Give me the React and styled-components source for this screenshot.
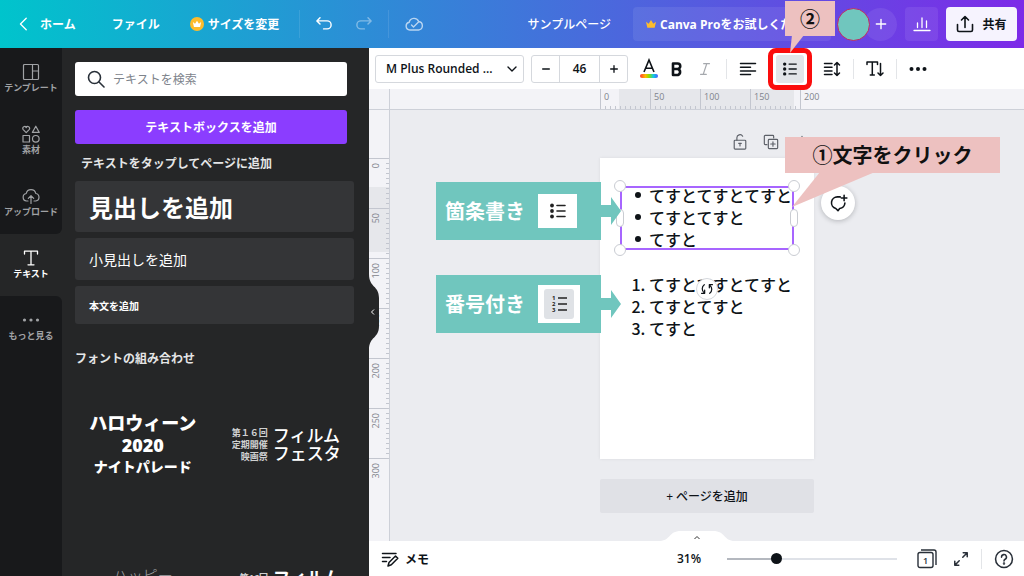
import React, {useState} from 'react';
import styled, {createGlobalStyle} from 'styled-components';

const FONT_PRESETS = ['M Plus Rounded ...', 'Noto Sans', 'Open Sans'];
const X_MARKS = [0, 50, 100, 150, 200];
const Y_MARKS = [0, 50, 100, 150, 200, 250, 300];

// アイコン共通
const Icon = ({size = 18, width = 1.5, children}) => (
  <svg
    width={size}
    height={size}
    viewBox="0 0 18 18"
    fill="none"
    stroke="currentColor"
    strokeWidth={width}
    strokeLinecap="round"
    strokeLinejoin="round"
    aria-hidden="true"
  >
    {children}
  </svg>
);

const BulletIcon = ({size}) => (
  <Icon size={size} width={1.6}>
    <g fill="currentColor" stroke="none">
      <circle cx="3" cy="3.5" r="1.9" />
      <circle cx="3" cy="9" r="1.9" />
      <circle cx="3" cy="14.5" r="1.9" />
    </g>
    <path d="M8 3.5h8M8 9h8M8 14.5h8" />
  </Icon>
);

const CrownPath = () => (
  <path
    d="M3.5 14.5L1.5 5.5l4 3L9 3l3.5 5.5 4-3-2 9z"
    fill="currentColor"
    stroke="none"
  />
);

const sideItems = [
  {
    label: 'テンプレート',
    icon: (
      <Icon width={1.2}>
        <rect x="1.5" y="1.5" width="15" height="15" rx="1" />
        <path d="M10.5 1.5v15M10.5 8h6" />
      </Icon>
    ),
  },
  {
    label: '素材',
    icon: (
      <Icon width={1.2}>
        <path d="M4.2 7.6L1 4.3C0 2 3 .4 4.2 2.6 5.4.4 8.4 2 7.4 4.3z" />
        <path d="M13.8 1.2l3.4 6.2h-6.8z" />
        <rect x="1" y="10.5" width="6.5" height="6.5" />
        <circle cx="13.8" cy="13.8" r="3.3" />
      </Icon>
    ),
  },
  {
    label: 'アップロード',
    icon: (
      <Icon width={1.2}>
        <path d="M6 14H4.5a3.8 3.8 0 0 1-.3-7.5A4.9 4.9 0 0 1 13.8 6.5a3.8 3.8 0 0 1 0 7.5H12" />
        <path d="M9 16.5V8.8M6.3 11.3L9 8.6l2.7 2.7" />
      </Icon>
    ),
  },
  {
    label: 'テキスト',
    active: true,
    icon: (
      <Icon width={1.3}>
        <path d="M2.5 5V2.2h13V5M9 2.2v13.6M6 15.8h6" />
      </Icon>
    ),
  },
  {
    label: 'もっと見る',
    icon: (
      <Icon>
        <g fill="currentColor" stroke="none">
          <circle cx="2.5" cy="9" r="1.6" />
          <circle cx="9" cy="9" r="1.6" />
          <circle cx="15.5" cy="9" r="1.6" />
        </g>
      </Icon>
    ),
  },
];

const Header = () => (
  <HeaderBar>
    <HomeLink href="#home">
      <Icon size={16}>
        <path d="M11.5 2.5L5 9l6.5 6.5" />
      </Icon>
      ホーム
    </HomeLink>
    <FileButton>ファイル</FileButton>
    <ResizeButton>
      <CrownBadge>
        <Icon size={10}>
          <CrownPath />
        </Icon>
      </CrownBadge>
      サイズを変更
    </ResizeButton>
    <HeaderLine />
    <History>
      <HeaderIcon aria-label="元に戻す">
        <Icon size={16} width={1.6}>
          <path d="M4.5 2L1 5.5 4.5 9M1 5.5h11.5a4.5 4.5 0 0 1 0 9H8.500" />
        </Icon>
      </HeaderIcon>
      <HeaderIcon aria-label="やり直す" disabled>
        <Icon size={16} width={1.6}>
          <path d="M13.5 2L17 5.5 13.5 9M17 5.5H5.500a4.5 4.5 0 0 0 0 9H9.500" />
        </Icon>
      </HeaderIcon>
    </History>
    <HeaderLine />
    <SavedMark>
      <Icon size={18} width={1.4}>
        <path d="M4.8 15a3.9 3.9 0 0 1-.6-7.700A5 5 0 0 1 13.700 6.500a4.300 4.300 0 0 1 0 8.500z" />
        <path d="M6.500 10l2 2 5-5" />
      </Icon>
    </SavedMark>
    <DocTitle>サンプルページ</DocTitle>
    <ProButton>
      <Icon size={12}>
        <CrownPath />
      </Icon>
      <span>Canva Proをお試しください</span>
    </ProButton>
    <Members>
      <Avatar />
      <AddMember aria-label="メンバーを追加">
        <Icon size={14} width={1.8}>
          <path d="M9 3v12M3 9h12" />
        </Icon>
      </AddMember>
    </Members>
    <StatsButton aria-label="分析">
      <Icon size={18} width={1.3}>
        <path d="M1 15.5h16M4.5 12.5V8M9 12.5V3M13.5 12.5V6" />
      </Icon>
    </StatsButton>
    <ShareButton>
      <Icon size={18} width={1.6}>
        <path d="M1.5 9.5v5.5a1.5 1.5 0 0 0 1.5 1.5h12a1.5 1.5 0 0 0 1.5-1.5V9.5M9 12.5V1.5M5.5 5L9 1.5 12.5 5" />
      </Icon>
      共有
    </ShareButton>
  </HeaderBar>
);

const TextPanel = () => (
  <Panel>
    <SearchBox>
      <Icon size={18} width={1.6}>
        <circle cx="7.5" cy="7.5" r="6" />
        <path d="M12 12l5 5" />
      </Icon>
      <input type="search" aria-label="テキストを検索" placeholder="テキストを検索" />
    </SearchBox>
    <AddBoxButton>テキストボックスを追加</AddBoxButton>
    <PanelHint>テキストをタップしてページに追加</PanelHint>
    <Presets>
      <PresetButton $size="24px" $height="51px" $weight="700">
        見出しを追加
      </PresetButton>
      <PresetButton $size="14px" $height="42px" $weight="400">
        小見出しを追加
      </PresetButton>
      <PresetButton $size="10px" $height="38px" $weight="700">
        本文を追加
      </PresetButton>
    </Presets>
    <PanelTitle>フォントの組み合わせ</PanelTitle>
    <Pairs>
      <HalloweenPair>
        <strong>ハロウィーン</strong>
        <strong>2020</strong>
        <span>ナイトパレード</span>
      </HalloweenPair>
      <FilmPair>
        <small>
          第１６回
          <br />
          定期開催
          <br />
          映画祭
        </small>
        <span>
          フィルム
          <br />
          フェスタ
        </span>
      </FilmPair>
      <HappyPair>ハッピー</HappyPair>
      <FilmPair $bold>
        <small>第16回</small>
        <span>フィルム</span>
      </FilmPair>
    </Pairs>
    <CollapseTab aria-label="パネルを閉じる">
      <svg width="11" height="76" viewBox="0 0 11 76" aria-hidden="true">
        <path d="M0 0c0 14 10 11 10 24v28c0 13-10 10-10 24z" fill="#252627" />
        <path d="M5 35.5L2.5 38 5 40.5" fill="none" stroke="#fff" />
      </svg>
    </CollapseTab>
  </Panel>
);

const Toolbar = () => {
  const [size, setSize] = useState(46);

  return (
    <ToolbarRow>
      <FontSelect>
        <select aria-label="フォント">
          {FONT_PRESETS.map((name) => (
            <option key={name}>{name}</option>
          ))}
        </select>
        <Icon size={12} width={2}>
          <path d="M3 6l6 6 6-6" />
        </Icon>
      </FontSelect>
      <Stepper>
        <button aria-label="小さく" onClick={() => setSize(size - 1)}>
          <Icon size={12} width={2}>
            <path d="M4 9h10" />
          </Icon>
        </button>
        <input
          aria-label="フォントサイズ"
          value={size}
          onChange={(e) => setSize(Number(e.target.value) || 0)}
        />
        <button aria-label="大きく" onClick={() => setSize(size + 1)}>
          <Icon size={12} width={2}>
            <path d="M4 9h10M9 4v10" />
          </Icon>
        </button>
      </Stepper>
      <ToolGroup>
        <ToolButton aria-label="文字色">
          <svg width="20" height="22" viewBox="0 0 20 22" aria-hidden="true">
            <defs>
              <linearGradient id="rainbow">
                <stop offset="0" stopColor="#ff3b30" />
                <stop offset="0.3" stopColor="#ffb800" />
                <stop offset="0.5" stopColor="#8be000" />
                <stop offset="0.75" stopColor="#12c8e8" />
                <stop offset="1" stopColor="#4a5cff" />
              </linearGradient>
            </defs>
            <path
              d="M5 14L10 2l5 12M6.7 10.2h6.6"
              fill="none"
              stroke="currentColor"
              strokeWidth="1.6"
            />
            <rect x="1" y="16" width="18" height="4" rx="2" fill="url(#rainbow)" />
          </svg>
        </ToolButton>
        <ToolButton aria-label="太字">
          <Icon size={18} width={2.6}>
            <path d="M5 3.500v11.500h5a3.200 3.200 0 0 0 0-6H5h4.500a2.750 2.750 0 0 0 0-5.500z" />
          </Icon>
        </ToolButton>
        <ToolButton aria-label="斜体" $muted>
          <Icon size={16} width={1.4}>
            <path d="M7.5 3H14M4 15h6.5M11 3L7 15" />
          </Icon>
        </ToolButton>
      </ToolGroup>
      <ToolLine />
      <ToolGroup $gap="14px">
        <ToolButton aria-label="配置">
          <Icon size={18}>
            <path d="M1.5 3.5h15M1.5 7.2h10M1.5 10.9h15M1.5 14.6h10" />
          </Icon>
        </ToolButton>
        <ListTool>
          <ToolButton aria-label="リスト" $active>
            <BulletIcon size={16} />
          </ToolButton>
          <RedFrame />
          <StepTwo>
            <svg width="16" height="20" viewBox="0 0 16 20" aria-hidden="true">
              <path d="M2 0L0 18 14 0z" fill="#edc1c0" />
            </svg>
            ②
          </StepTwo>
        </ListTool>
        <ToolButton aria-label="行間">
          <Icon size={18}>
            <path d="M1.5 3.5H9M1.5 7.2H9M1.5 10.9H9M1.5 14.6H9M14 2.5v13M11.5 5L14 2.5 16.5 5M11.5 13l2.5 2.5 2.5-2.5" />
          </Icon>
        </ToolButton>
      </ToolGroup>
      <ToolLine />
      <ToolButton aria-label="縦書き">
        <Icon size={18}>
          <path d="M1 4.5V2h10.5v2.5M6.3 2v13M4.3 15h4M14.5 3.5v12M12 13l2.5 2.5L17 13" />
        </Icon>
      </ToolButton>
      <ToolLine />
      <ToolButton aria-label="その他">
        <Icon size={18}>
          <g fill="currentColor" stroke="none">
            <circle cx="2.5" cy="9" r="2" />
            <circle cx="9" cy="9" r="2" />
            <circle cx="15.5" cy="9" r="2" />
          </g>
        </Icon>
      </ToolButton>
    </ToolbarRow>
  );
};

const ArrowTip = () => (
  <svg width="20" height="28" viewBox="0 0 20 28" aria-hidden="true">
    <path d="M0 8h10V0l10 14-10 14v-8H0z" fill="#70c6be" />
  </svg>
);

const DesignPage = () => (
  <PageColumn>
    <PageTools>
      <button aria-label="ロック">
        <Icon size={16} width={1.3}>
          <rect x="2.5" y="7" width="13" height="10" rx="1" />
          <path d="M5.5 7V4.5a3.5 3.5 0 0 1 6.5-2M9 13.5v-3M7.5 10.5h3" />
        </Icon>
      </button>
      <button aria-label="複製">
        <Icon size={16} width={1.3}>
          <path d="M4.5 12H2.5a1 1 0 0 1-1-1V2.5a1 1 0 0 1 1-1H11a1 1 0 0 1 1 1v2" />
          <rect x="6" y="6" width="10.5" height="10.5" rx="1" />
          <path d="M11.2 8.8v5M8.7 11.3h5" />
        </Icon>
      </button>
      <button aria-label="ページを追加">
        <Icon size={16} width={1.3}>
          <path d="M9 2.5v8M5.5 10L9 6.5l3.5 3.5M2.5 10v6h13v-6" />
        </Icon>
      </button>
    </PageTools>
    <Page>
      <SelectedText>
        <BulletList>
          <li>てすとてすとてすと</li>
          <li>てすとてすと</li>
          <li>てすと</li>
        </BulletList>
        <Frame />
        <Handle $x="0%" $y="0%" />
        <Handle $x="100%" $y="0%" />
        <Handle $x="0%" $y="100%" />
        <Handle $x="100%" $y="100%" />
        <Handle $x="0%" $y="50%" $side />
        <Handle $x="100%" $y="50%" $side />
        <RotateButton aria-label="回転">
          <Icon size={14} width={1.6}>
            <path d="M5.5 3.5C2 6 2 11 5.5 14M2 14.5h4V10.500M12.500 14.500C16 12 16 7 12.500 4M16 3.5h-4V7.500" />
          </Icon>
        </RotateButton>
      </SelectedText>
      <NumberList>
        <li>てすとてすとてすと</li>
        <li>てすとてすと</li>
        <li>てすと</li>
      </NumberList>

      <CommentButton aria-label="コメント">
        <Icon size={20} width={1.4}>
          <path d="M11 3.500H8.500A5.300 5.300 0 0 0 7 13.900l2 2 1.500-2A5.300 5.300 0 0 0 15.200 9M14.500 2v5M12 4.500h5" />
        </Icon>
      </CommentButton>

      {/* 説明用の吹き出し */}
      <LabelNote $top="24px">
        箇条書き
        <NoteIcon>
          <BulletIcon size={18} />
        </NoteIcon>
        <ArrowTip />
      </LabelNote>
      <LabelNote $top="117px">
        番号付き
        <NoteIcon $framed>
          <span>
            <svg width="20" height="20" viewBox="0 0 20 20" aria-hidden="true">
              <g fill="#222" fontSize="6" fontWeight="700" fontFamily="Open Sans, sans-serif">
                <text x="3" y="6">1</text>
                <text x="3" y="12">2</text>
                <text x="3" y="18">3</text>
              </g>
              <path d="M9 4h9M9 10h9M9 16h9" stroke="#222" strokeWidth="1.5" />
            </svg>
          </span>
        </NoteIcon>
        <ArrowTip />
      </LabelNote>
      <StepOne>
        <svg width="90" height="36" viewBox="0 0 90 36" aria-hidden="true">
          <path d="M28 0L0 35 83 0z" fill="#edc1c0" />
        </svg>
        ①文字をクリック
      </StepOne>
    </Page>
    <AddPageButton>+ ページを追加</AddPageButton>
  </PageColumn>
);

const BottomBar = () => {
  const [zoom, setZoom] = useState(31);

  return (
    <Footer>
      <DrawerTab aria-label="ページ一覧を開く">
        <svg width="76" height="11" viewBox="0 0 76 11" aria-hidden="true">
          <path d="M0 11C12 11 9 1 22 1h32c13 0 10 10 22 10z" fill="#fff" />
          <path d="M35.5 9L38 6.5 40.5 9" fill="none" stroke="#333" />
        </svg>
      </DrawerTab>
      <NotesButton>
        <Icon size={18} width={1.5}>
          <path d="M1.5 3.5H15M1.5 7.5h7.5M1.5 11.5h4M7 16l1-3.5 6.5-6.5 2.3 2.3-6.5 6.5z" />
        </Icon>
        メモ
      </NotesButton>
      <ZoomGroup>
        <label htmlFor="zoom">{zoom}%</label>
        <ZoomSlider
          id="zoom"
          type="range"
          min="5"
          max="100"
          value={zoom}
          onChange={(e) => setZoom(Number(e.target.value))}
          style={{'--fill': `${((zoom - 5) / 95) * 100}%`}}
        />
      </ZoomGroup>
      <PageCount aria-label="ページ 1">
        <svg width="20" height="20" viewBox="0 0 20 20" aria-hidden="true">
          <g fill="none" stroke="currentColor" strokeWidth="1.4">
            <rect x="1" y="3.5" width="15" height="15" rx="2" />
            <path d="M4 1h13a2 2 0 0 1 2 2v13" />
          </g>
          <text x="6" y="14.5" fontSize="9" fontWeight="600" fill="currentColor">
            1
          </text>
        </svg>
      </PageCount>
      <FooterIcon aria-label="全画面">
        <Icon size={16} width={1.7}>
          <path d="M11 7l5-5M11.5 2H16v4.5M7 11l-5 5M2 11.5V16h4.5" />
        </Icon>
      </FooterIcon>
      <ToolLine />
      <FooterIcon aria-label="ヘルプ">
        <Icon size={20} width={1.4}>
          <circle cx="9" cy="9" r="7.6" />
          <path d="M6.8 7.3a2.2 2.2 0 1 1 3.2 1.9c-.7.4-1 .8-1 1.5" />
          <circle cx="9" cy="13" r=".4" />
        </Icon>
      </FooterIcon>
    </Footer>
  );
};

const App = () => {
  return (
    <Shell>
      <GlobalStyle />
      <Header />
      <Main>
        <SideNav>
          {sideItems.map((item) => (
            <SideItem key={item.label} $active={item.active}>
              {item.icon}
              {item.label}
            </SideItem>
          ))}
        </SideNav>
        <TextPanel />
        <Editor>
          <Toolbar />
          <TopRuler>
            <RulerCorner />
            <RulerX>
              {X_MARKS.map((mark) => (
                <MarkX key={mark} $last={mark === 200}>
                  {mark}
                </MarkX>
              ))}
            </RulerX>
          </TopRuler>
          <Workspace>
            <RulerY>
              {Y_MARKS.map((mark) => (
                <MarkY key={mark} $last={mark === 300}>
                  <span>{mark}</span>
                </MarkY>
              ))}
            </RulerY>
            <Stage>
              <DesignPage />
            </Stage>
          </Workspace>
          <BottomBar />
        </Editor>
      </Main>
    </Shell>
  );
};

export default App;

const GlobalStyle = createGlobalStyle`
  * {
    box-sizing: border-box;
  }

  body {
    margin: 0;
    font-family: 'Open Sans', 'Noto Sans CJK JP', sans-serif;
    font-size: 12px;
    color: #0e1318;
  }

  button, input, select {
    font: inherit;
    color: inherit;
  }

  button {
    display: flex;
    align-items: center;
    justify-content: center;
    padding: 0;
    border: 0;
    background: none;
    white-space: nowrap;
    cursor: pointer;
  }

  svg {
    flex-shrink: 0;
  }
`;

const Shell = styled.div`
  height: 100vh;
  display: flex;
  flex-direction: column;
  overflow: hidden;
`;

const HeaderBar = styled.header`
  flex: 0 0 48px;
  display: flex;
  align-items: center;
  padding: 0 7px 0 16px;
  color: #fff;
  font-weight: 700;
  background: linear-gradient(90deg, #00c4cc, #7d2ae8);
`;

const HomeLink = styled.a`
  display: flex;
  align-items: center;
  gap: 8px;
  color: inherit;
  text-decoration: none;
  white-space: nowrap;
`;

const FileButton = styled.button`
  margin-left: 36px;
`;

const ResizeButton = styled.button`
  gap: 4px;
  margin: 0 20px 0 30px;
`;

const CrownBadge = styled.span`
  width: 14px;
  height: 14px;
  display: flex;
  align-items: center;
  justify-content: center;
  border-radius: 50%;
  background: #fdbc2b;
`;

const HeaderLine = styled.span`
  width: 1px;
  height: 28px;
  background: rgba(255, 255, 255, 0.1);
`;

const History = styled.div`
  display: flex;
  gap: 24px;
  margin: 0 16px;
`;

const HeaderIcon = styled.button`
  &:disabled {
    opacity: 0.4;
  }
`;

const SavedMark = styled.span`
  display: flex;
  margin-left: 16px;
  opacity: 0.65;
`;

const DocTitle = styled.span`
  margin: 0 22px 0 auto;
  font-weight: 500;
  white-space: nowrap;
`;

const ProButton = styled.button`
  height: 34px;
  gap: 3px;
  width: 198px;
  justify-content: flex-start;
  padding-left: 12px;
  border-radius: 4px;
  background: rgba(255, 255, 255, 0.08);
  overflow: hidden;

  svg {
    color: #fdbc2b;
  }
`;

const Members = styled.div`
  display: flex;
  margin: 0 8px 0 6px;
`;

const Avatar = styled.span`
  position: relative;
  width: 33px;
  height: 33px;
  border: 1px solid #c02a63;
  border-radius: 50%;
  background: #70c6be;
`;

const AddMember = styled.button`
  width: 33px;
  height: 33px;
  margin-left: -6px;
  border-radius: 50%;
  background: rgba(255, 255, 255, 0.08);
`;

const StatsButton = styled.button`
  width: 33px;
  height: 34px;
  border-radius: 4px;
  background: rgba(255, 255, 255, 0.08);
`;

const ShareButton = styled.button`
  width: 71px;
  height: 34px;
  gap: 8px;
  margin-left: 8px;
  border-radius: 4px;
  color: #0e1318;
  background: #f6f3fe;
`;

const Main = styled.div`
  flex: 1;
  min-height: 0;
  display: grid;
  grid-template-columns: 62px 307px minmax(0, 1fr);
`;

const SideNav = styled.nav`
  display: flex;
  flex-direction: column;
  background: #252627;

  &::after {
    content: '';
    flex: 1;
    background: #18191b;
  }
`;

const SideItem = styled.button`
  height: 62px;
  flex-direction: column;
  gap: 1px;
  padding-bottom: 2px;
  font-size: 9px;
  line-height: 12px;
  font-weight: 700;
  color: ${({$active}) => ($active ? '#fff' : '#a0a2a5')};
  background: ${({$active}) => ($active ? '#252627' : '#18191b')};

  &:nth-child(3) {
    border-bottom-right-radius: 6px;
  }

  &:nth-child(5) {
    border-top-right-radius: 6px;
  }
`;

const Panel = styled.aside`
  position: relative;
  z-index: 2;
  min-height: 0;
  display: flex;
  flex-direction: column;
  padding: 14px 15px 0 13px;
  color: #fff;
  background: #252627;
`;

const SearchBox = styled.div`
  flex: 0 0 34px;
  display: flex;
  align-items: center;
  gap: 8px;
  margin-right: 7px;
  padding: 0 12px;
  border-radius: 3px;
  background: #fff;
  color: #293039;

  input {
    flex: 1;
    min-width: 0;
    border: 0;
    padding: 0;
    outline: none;
    background: none;
  }

  input::placeholder {
    color: #7d838b;
  }
`;

const AddBoxButton = styled.button`
  flex: 0 0 34px;
  margin: 14px 7px 0 0;
  border-radius: 3px;
  background: #8b3dff;
  font-weight: 700;
`;

const PanelHint = styled.p`
  margin: 11px 0 8px 6px;
  line-height: 18px;
  font-weight: 700;
  color: #e4e5e6;
`;

const Presets = styled.div`
  display: flex;
  flex-direction: column;
  gap: 6px;
`;

const PresetButton = styled.button`
  height: ${({$height}) => $height};
  justify-content: flex-start;
  padding-left: 14px;
  border-radius: 3px;
  background: #343537;
  font-size: ${({$size}) => $size};
  font-weight: ${({$weight}) => $weight};
`;

const PanelTitle = styled.h2`
  margin: 26px 0 0;
  font-size: 12px;
  line-height: 18px;
  color: #e4e5e6;
`;

const Pairs = styled.div`
  flex: 1;
  min-height: 0;
  display: grid;
  grid-template-columns: 1fr 1fr;
  grid-template-rows: 154px 24px;
  gap: 44px 8px;
  align-items: center;
  align-content: start;
  justify-items: center;
  overflow: hidden;
`;

const HalloweenPair = styled.div`
  display: flex;
  flex-direction: column;
  align-items: center;
  line-height: 22px;
  font-size: 14px;
  font-weight: 900;

  strong {
    font-size: 18px;
    font-weight: 900;
  }
`;

const FilmPair = styled.div`
  display: flex;
  align-items: ${({$bold}) => ($bold ? 'center' : 'flex-start')};
  gap: 5px;
  font-size: 17px;
  line-height: 18px;
  font-weight: ${({$bold}) => ($bold ? 700 : 500)};
  white-space: nowrap;

  small {
    width: 36px;
    font-size: 9px;
    line-height: 12px;
    font-weight: 700;
    text-align: right;
    color: #cfd0d1;
  }
`;

const HappyPair = styled.div`
  align-self: start;
  font-size: 15px;
  line-height: 18px;
  font-weight: 300;
  color: #a0a2a5;
`;

const CollapseTab = styled.button`
  position: absolute;
  left: 100%;
  top: 50%;
  transform: translateY(-50%);
`;

const Editor = styled.main`
  min-width: 0;
  min-height: 0;
  display: flex;
  flex-direction: column;
  background: #ebecf0;
`;

const ToolbarRow = styled.div`
  flex: 0 0 41px;
  display: flex;
  align-items: center;
  gap: 7px;
  padding-left: 6px;
  background: #fff;
`;

const FontSelect = styled.div`
  position: relative;
  width: 149px;

  select {
    width: 100%;
    height: 28px;
    padding: 0 28px 0 10px;
    border: 1px solid #d5d8dd;
    border-radius: 3px;
    background: #fff;
    font-weight: 600;
    appearance: none;
  }

  svg {
    position: absolute;
    right: 6px;
    top: 8px;
    pointer-events: none;
  }
`;

const Stepper = styled.div`
  width: 97px;
  height: 28px;
  display: grid;
  grid-template-columns: 27px 1fr 27px;
  border: 1px solid #d5d8dd;
  border-radius: 3px;

  input {
    min-width: 0;
    padding: 0;
    border: solid #d5d8dd;
    border-width: 0 1px;
    text-align: center;
    font-weight: 600;
  }
`;

const ToolGroup = styled.div`
  display: flex;
  gap: ${({$gap}) => $gap || '0'};
`;

const ToolButton = styled.button`
  width: 28px;
  height: 28px;
  border-radius: 3px;
  color: ${({$muted}) => ($muted ? '#a5a8ad' : '#0e1318')};
  background: ${({$active}) => ($active ? '#e2e5e9' : 'none')};
`;

const ToolLine = styled.span`
  width: 1px;
  height: 20px;
  background: #e3e5e8;
`;

const ListTool = styled.div`
  position: relative;
  z-index: 3;
`;

const RedFrame = styled.span`
  position: absolute;
  inset: -7px -8px;
  border: 5px solid #fb0d0d;
  border-radius: 8px;
  pointer-events: none;
`;

const Callout = styled.div`
  position: absolute;
  display: flex;
  align-items: center;
  justify-content: center;
  background: #edc1c0;
  color: #111;
  font-size: 20px;
  font-weight: 700;
  white-space: nowrap;
`;

const StepTwo = styled(Callout)`
  left: 9px;
  top: -54px;
  width: 50px;
  height: 35px;

  svg {
    position: absolute;
    left: 5px;
    top: 34px;
  }
`;

const StepOne = styled(Callout)`
  left: 185px;
  top: -21px;
  width: 215px;
  height: 36px;

  svg {
    position: absolute;
    left: 7px;
    top: 35px;
  }
`;

const TopRuler = styled.div`
  flex: 0 0 21px;
  display: flex;
  border-bottom: 1px solid #cdd0d8;
  background: #f3f3f7;
`;

const RulerCorner = styled.div`
  flex: 0 0 21px;
  border-right: 1px solid #cdd0d8;
`;

const RulerX = styled.div`
  width: 214px;
  margin: 0 auto;
  display: flex;
  background: linear-gradient(90deg, transparent 19px, #e6e7eb 19px 194px, transparent 194px);
`;

const MarkX = styled.span`
  flex: 0 0 50px;
  padding: 2px 0 0 3px;
  border-left: 1px solid #c3c6cf;
  color: #7f838b;
  font-size: 9px;
  line-height: 12px;
  background: ${({$last}) =>
    $last
      ? 'none'
      : 'repeating-linear-gradient(90deg, transparent 0 4px, #c3c6cf 4px 5px) bottom / 100% 3px no-repeat'};
`;

const Workspace = styled.div`
  flex: 1;
  min-height: 0;
  display: flex;
`;

const RulerY = styled.div`
  flex: 0 0 21px;
  display: flex;
  flex-direction: column;
  padding-top: 48px;
  border-right: 1px solid #cdd0d8;
  background: linear-gradient(#f3f3f7 77px, #e6e7eb 77px 142px, #f3f3f7 142px);
`;

const MarkY = styled.div`
  flex: 0 0 50px;
  display: flex;
  padding: 4px 0 0 1px;
  border-top: 1px solid #c3c6cf;
  color: #7f838b;
  font-size: 9px;
  line-height: 12px;
  background: ${({$last}) =>
    $last
      ? 'none'
      : 'repeating-linear-gradient(transparent 0 4px, #c3c6cf 4px 5px) right / 3px 100% no-repeat'};

  span {
    align-self: flex-start;
    writing-mode: vertical-rl;
    transform: rotate(180deg);
  }
`;

const Stage = styled.section`
  flex: 1;
  min-width: 0;
  display: flex;
  justify-content: center;
`;

const PageColumn = styled.div`
  width: 214px;
  display: flex;
  flex-direction: column;
  padding-top: 24px;
`;

const PageTools = styled.div`
  display: flex;
  justify-content: flex-end;
  gap: 15px;
  padding-right: 4px;
  margin-bottom: 8px;
  color: #5c6068;
`;

const Page = styled.article`
  position: relative;
  min-height: 301px;
  padding: 28px 19px;
  background: #fff;
  box-shadow: 0 0 3px rgba(14, 19, 24, 0.08);
  font-family: 'Noto Sans CJK JP', sans-serif;
  font-size: 16px;
  line-height: 22px;
  font-weight: 500;
  white-space: nowrap;
`;

const SelectedText = styled.div`
  position: relative;
  display: flow-root;
  width: 174px;
  height: 64px;
  margin-left: 1px;
`;

const BulletList = styled.ul`
  margin: -2px 0 0;
  padding: 0 0 0 15px;
  list-style: none;

  li {
    display: flex;
    align-items: center;
    gap: 8px;
  }

  li::before {
    content: '';
    width: 6px;
    height: 6px;
    border-radius: 50%;
    background: #0e1318;
  }
`;

const NumberList = styled.ol`
  margin: 23px 0 0;
  padding: 0 0 0 30px;
`;

const Frame = styled.span`
  position: absolute;
  inset: 0;
  border: 2px solid #a765ff;
  pointer-events: none;
`;

const Handle = styled.span`
  position: absolute;
  left: ${({$x}) => $x};
  top: ${({$y}) => $y};
  width: ${({$side}) => ($side ? '8px' : '12px')};
  height: ${({$side}) => ($side ? '18px' : '12px')};
  transform: translate(-50%, -50%);
  border: 1px solid #c9ccd2;
  border-radius: 6px;
  background: #fff;
`;

const RotateButton = styled.button`
  position: absolute;
  z-index: 1;
  left: 50%;
  top: 92px;
  width: 22px;
  height: 22px;
  transform: translateX(-50%);
  border: 1px solid #d5d8dd;
  border-radius: 50%;
  background: #fff;
`;

const CommentButton = styled.button`
  position: absolute;
  left: 221px;
  top: 28px;
  width: 34px;
  height: 34px;
  border-radius: 50%;
  background: #fff;
  box-shadow: 0 1px 5px rgba(14, 19, 24, 0.25);
`;

const LabelNote = styled.div`
  position: absolute;
  right: calc(100% - 1px);
  top: ${({$top}) => $top};
  width: 165px;
  height: 58px;
  display: flex;
  align-items: center;
  gap: 13px;
  padding-left: 9px;
  background: #70c6be;
  color: #fff;
  font-size: 20px;
  font-weight: 700;

  > svg {
    position: absolute;
    left: 100%;
    top: 15px;
  }
`;

const NoteIcon = styled.span`
  width: ${({$framed}) => ($framed ? '42px' : '39px')};
  height: ${({$framed}) => ($framed ? '38px' : '34px')};
  display: flex;
  align-items: center;
  justify-content: center;
  background: #fff;
  color: #222;

  span {
    width: 30px;
    height: 30px;
    display: flex;
    align-items: center;
    justify-content: center;
    border-radius: 3px;
    background: #dfe2e6;
  }
`;

const AddPageButton = styled.button`
  height: 34px;
  margin-top: 20px;
  border-radius: 2px;
  background: #e0e1e6;
  font-weight: 500;
`;

const Footer = styled.footer`
  position: relative;
  flex: 0 0 35px;
  display: flex;
  align-items: center;
  gap: 12px;
  padding: 0 10px 0 12px;
  background: #fff;
`;

const DrawerTab = styled.button`
  position: absolute;
  left: 50%;
  bottom: 100%;
  transform: translateX(-50%);
`;

const NotesButton = styled.button`
  gap: 6px;
  font-weight: 700;
`;

const ZoomGroup = styled.div`
  display: flex;
  align-items: center;
  gap: 26px;
  margin: 0 8px 0 auto;
  font-weight: 600;
`;

const ZoomSlider = styled.input`
  width: 170px;
  height: 11px;
  margin: 0;
  appearance: none;
  background: linear-gradient(90deg, #b4b8bf var(--fill), #dfe2e8 var(--fill)) center / 100% 2px
    no-repeat;

  &::-webkit-slider-thumb {
    appearance: none;
    width: 11px;
    height: 11px;
    border-radius: 50%;
    background: #0e1318;
  }
`;

const FooterIcon = styled.button`
  color: #293039;
`;

const PageCount = styled(FooterIcon)`
  margin-right: 4px;
`;
